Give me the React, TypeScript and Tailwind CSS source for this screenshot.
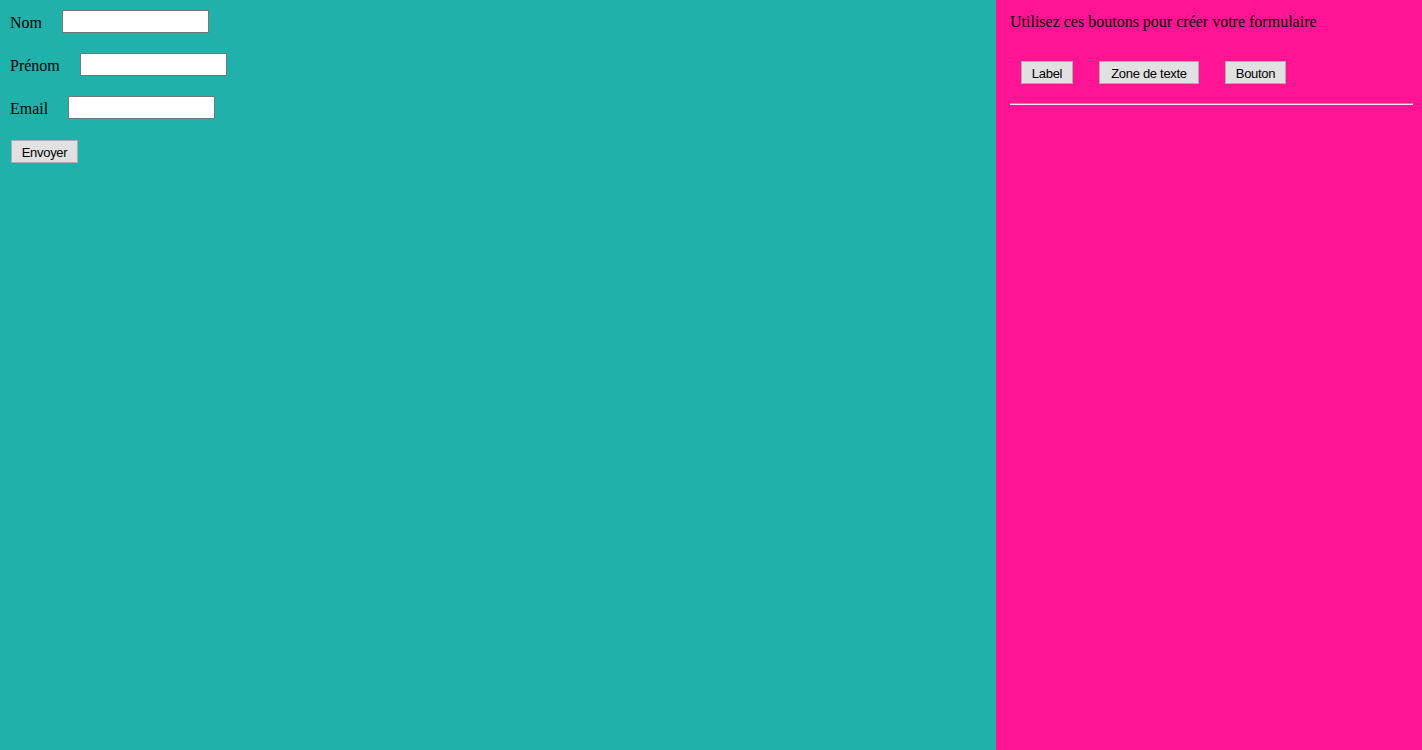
import React from "react";

const serif = { fontFamily: '"Liberation Serif", "Times New Roman", serif' };

function Row({ label }: { label: string }) {
  return (
    <div className="flex items-center h-[23px] mb-[20px]">
      <span className="text-[16px] leading-none text-black mr-[20px] mt-[2px]">{label}</span>
      <input
        type="text"
        className="w-[147px] h-[23px] bg-white border border-[#767676] outline-none px-[2px] text-[13px]"
      />
    </div>
  );
}

function Btn({ children, w }: { children: React.ReactNode; w: string }) {
  return (
    <button
      className={`${w} h-[23px] bg-[#e1e1e1] border border-[#adadad] text-[13px] tracking-[-0.3px] text-black flex items-center justify-center leading-none pt-[1px]`}
      style={{ fontFamily: '"Liberation Sans", Tahoma, Arial, sans-serif' }}
    >
      {children}
    </button>
  );
}

export default function App() {
  return (
    <div className="flex w-[1422px] h-[750px] overflow-hidden" style={serif}>
      <div className="w-[996px] h-full bg-[#20b2aa] pl-[10px] pt-[10px]">
        <Row label="Nom" />
        <Row label="Prénom" />
        <Row label="Email" />
        <div className="pt-[1px] pl-[1px]">
          <Btn w="w-[67px]">Envoyer</Btn>
        </div>
      </div>
      <div className="flex-1 h-full bg-[#ff1493] pl-[14px] pr-[9px]">
        <div className="pt-[13px] text-[16px] leading-[18px] text-black">
          Utilisez ces boutons pour créer votre formulaire
        </div>
        <div className="flex gap-[26px] pl-[11px] mt-[30px]">
          <Btn w="w-[52px]">Label</Btn>
          <Btn w="w-[100px]">Zone de texte</Btn>
          <Btn w="w-[61px]">Bouton</Btn>
        </div>
        <div className="mt-[19px] h-[2px] border-t border-t-[#9a9a9a] border-b border-b-[#eeeeee]" />
      </div>
    </div>
  );
}
